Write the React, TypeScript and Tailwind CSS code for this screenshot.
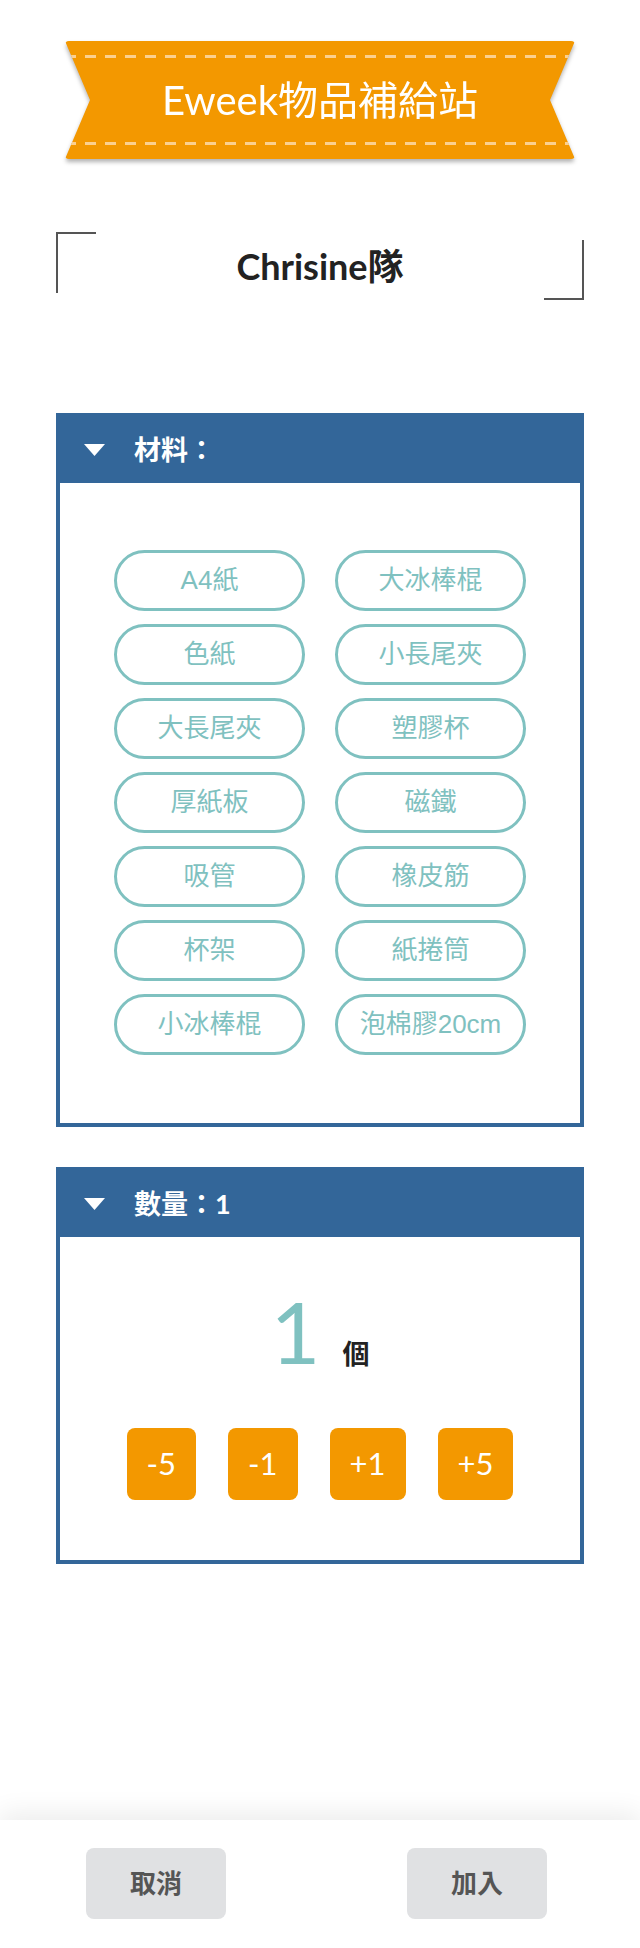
import type { ReactNode } from "react"

const MATERIALS = [
  "A4紙",
  "大冰棒棍",
  "色紙",
  "小長尾夾",
  "大長尾夾",
  "塑膠杯",
  "厚紙板",
  "磁鐵",
  "吸管",
  "橡皮筋",
  "杯架",
  "紙捲筒",
  "小冰棒棍",
  "泡棉膠20cm",
]

const STEPS = ["-5", "-1", "+1", "+5"]

// 緞帶形標題：兩端內凹，上下各一條虛線
function Banner() {
  return (
    <div className="mx-auto w-[510px] drop-shadow-[0_3px_2px_rgba(0,0,0,0.3)]">
      <div className="flex h-[118px] flex-col justify-between rounded-[4px] bg-[#f39800] py-[14px] [clip-path:polygon(0_0,510px_0,485px_50%,510px_100%,0_100%,25px_50%)]">
        <div className="h-[3px] bg-[repeating-linear-gradient(90deg,#fbd08f_0_11px,transparent_11px_20px)]" />
        <p className="text-center text-[40px] leading-none text-white">Eweek物品補給站</p>
        <div className="h-[3px] bg-[repeating-linear-gradient(90deg,#fbd08f_0_11px,transparent_11px_20px)]" />
      </div>
    </div>
  )
}

function Caret() {
  return (
    <svg width="21" height="12" viewBox="0 0 21 12" aria-hidden>
      <polygon points="0,0 21,0 10.5,12" fill="#ffffff" />
    </svg>
  )
}

function Panel({ title, children, className }: { title: string; children: ReactNode; className?: string }) {
  return (
    <section className={`border-4 border-[#336699] ${className ?? ""}`}>
      <div className="flex h-[66px] items-center bg-[#336699] pl-[24px]">
        <Caret />
        <span className="ml-[29px] text-[27px] font-bold text-white">{title}</span>
      </div>
      {children}
    </section>
  )
}

export default function App() {
  return (
    <div className="flex min-h-[1948px] flex-col bg-white font-['Lato','Noto_Sans_CJK_TC',sans-serif]">
      <div className="px-[56px] pt-[41px]">
        <Banner />

        {/* 隊名，左上與右下的角框 */}
        <div className="mt-[73px] flex h-[68px] justify-between">
          <span className="h-[61px] w-[40px] self-start border-l-2 border-t-2 border-[#555555]" />
          <h1 className="self-center text-[36px] font-bold text-[#222222]">Chrisine隊</h1>
          <span className="h-[60px] w-[40px] self-end border-b-2 border-r-2 border-[#555555]" />
        </div>

        <Panel title="材料：" className="mt-[113px]">
          <div className="grid grid-cols-[191px_191px] justify-center gap-x-[30px] gap-y-[13px] pb-[68px] pt-[67px]">
            {MATERIALS.map((m) => (
              <button
                key={m}
                type="button"
                className="flex h-[61px] items-center justify-center rounded-full border-[3px] border-[#7fc1c0] font-['Liberation_Sans','Noto_Sans_CJK_TC',sans-serif] text-[26px] text-[#7fc1c0]"
              >
                {m}
              </button>
            ))}
          </div>
        </Panel>

        <Panel title="數量：1" className="mt-[40px]">
          <div className="flex flex-col items-center pb-[60px] pt-[51px]">
            <div className="flex items-baseline">
              <span className="text-[86px] leading-none text-[#7fc1c0]">1</span>
              <span className="ml-[22px] text-[27px] font-bold text-[#222222]">個</span>
            </div>
            <div className="mt-[53px] flex gap-8">
              {STEPS.map((s) => (
                <button
                  key={s}
                  type="button"
                  className="h-[72px] rounded-lg bg-[#f39800] px-5 text-[31px] text-white"
                >
                  {s}
                </button>
              ))}
            </div>
          </div>
        </Panel>
      </div>

      <div className="flex-1" />

      <footer className="flex h-[128px] items-start gap-[181px] bg-white pl-[86px] pt-[28px] shadow-[0_-8px_24px_rgba(0,0,0,0.07)]">
        <button type="button" className="h-[71px] w-[140px] rounded-lg bg-[#e0e1e3] text-[26px] font-bold text-[#555555]">
          取消
        </button>
        <button type="button" className="h-[71px] w-[140px] rounded-lg bg-[#e0e1e3] text-[26px] font-bold text-[#555555]">
          加入
        </button>
      </footer>
    </div>
  )
}
